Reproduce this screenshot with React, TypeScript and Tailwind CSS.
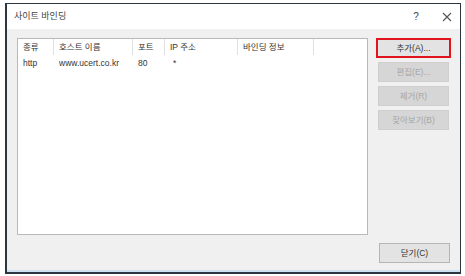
const FONT = "font-['Liberation_Sans','Noto_Sans_CJK_KR',sans-serif]";

const COLUMNS = [
  { label: '종류', w: 'w-[36px]' },
  { label: '호스트 이름', w: 'w-[79px]' },
  { label: '포트', w: 'w-[32px]' },
  { label: 'IP 주소', w: 'w-[73px]' },
  { label: '바인딩 정보', w: 'w-[76px]' },
];

const ROWS = [['http', 'www.ucert.co.kr', '80', '*', '']];

function Button({ label, disabled, focused }: { label: string; disabled?: boolean; focused?: boolean }) {
  return (
    <div
      className={`h-[20px] flex items-center justify-center text-[8.5px] ${
        focused
          ? 'border-2 border-[#e0141e] bg-[#e3e3e3] text-[#333]'
          : disabled
            ? 'border border-[#cfcfcf] bg-[#d6d6d6] text-[#a6a6a6]'
            : 'border border-[#b5b5b5] bg-[#e3e3e3] text-[#333]'
      }`}
    >
      {label}
    </div>
  );
}

export default function App() {
  return (
    <div className={`w-[465px] h-[276px] bg-white pl-[5px] pt-[3px] ${FONT}`}>
      <div className="w-[456px] h-[271px] border-l-2 border-r border-t border-b-2 border-[#2c3642] flex flex-col bg-[#f0f0f0]">
        {/* 타이틀 바 */}
        <div className="h-[25px] bg-white flex items-center pl-[7px] pr-[8px] text-[9px] text-[#444]">
          <span className="flex-1">사이트 바인딩</span>
          <span className="w-[14px] text-center text-[10px] mr-[19px]">?</span>
          <svg width="10" height="10" viewBox="0 0 10 10">
            <path d="M1 1L9 9M9 1L1 9" stroke="#555" strokeWidth="1.1" />
          </svg>
        </div>

        {/* 본문 */}
        <div className="flex-1 flex flex-col pl-[10px] pr-[8px] pt-[9px] border-b-2 border-[#cfe0f0]">
          <div className="flex gap-[8px]">
            <div className="w-[351px] h-[197px] bg-white border border-[#b9b9b9] text-[8.5px] text-[#333]">
              <div className="flex h-[16px] items-center">
                {COLUMNS.map((c) => (
                  <div key={c.label} className={`${c.w} h-full flex items-center pl-[5px] border-r border-[#e0e0e0]`}>
                    {c.label}
                  </div>
                ))}
              </div>
              {ROWS.map((r, i) => (
                <div key={i} className="flex h-[17px] items-center">
                  {r.map((v, j) => (
                    <div key={j} className={`${COLUMNS[j].w} ${j === 3 ? 'pl-[8px]' : 'pl-[5px]'}`}>
                      {v}
                    </div>
                  ))}
                </div>
              ))}
            </div>
            <div className="w-[75px] flex flex-col gap-[4px]">
              <Button label="추가(A)..." focused />
              <div className="px-[2px] flex flex-col gap-[4px]">
                <Button label="편집(E)..." disabled />
                <Button label="제거(R)" disabled />
                <Button label="찾아보기(B)" disabled />
              </div>
            </div>
          </div>
          <div className="flex justify-end mt-[8px]">
            <div className="w-[71px] mr-[2px]">
              <Button label="닫기(C)" />
            </div>
          </div>
        </div>
      </div>
    </div>
  );
}
